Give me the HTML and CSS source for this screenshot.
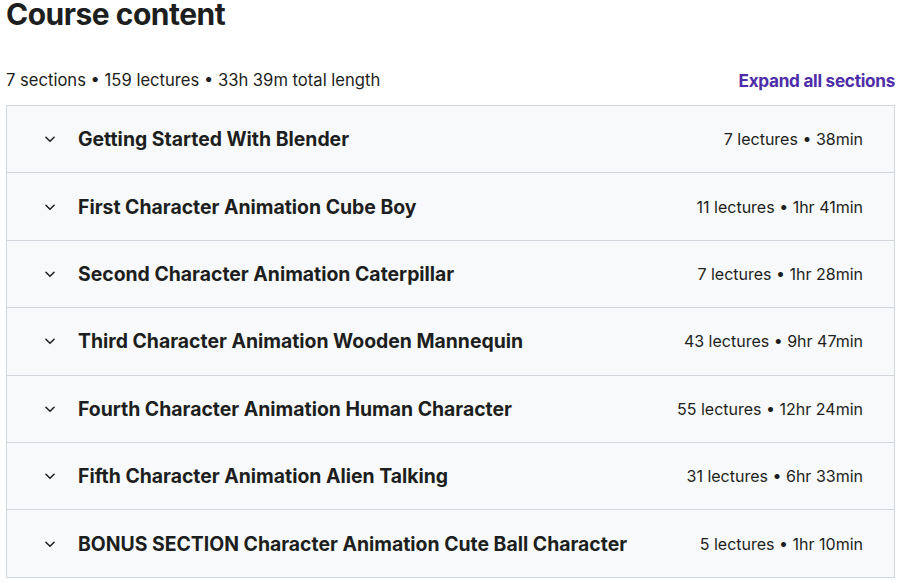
FILE: index.html
```html
<!DOCTYPE html>
<html>
<head>
<meta charset="utf-8">
<link rel="stylesheet" href="styles.css">
</head>
<body>
<div class="page">
  <h2 class="title">Course content</h2>
  <div class="meta">
    <span class="summary">7 sections • 159 lectures • 33h 39m total length</span>
    <button class="expand">Expand all sections</button>
  </div>
  <div class="sections">
    <div class="row">
      <span class="chev"><svg width="14" height="14" viewBox="0 0 24 24"><path d="M5 9l7 7 7-7" fill="none" stroke="#1d1e20" stroke-width="2.6" stroke-linecap="round" stroke-linejoin="round"/></svg></span>
      <span class="name">Getting Started With Blender</span>
      <span class="info">7 lectures • 38min</span>
    </div>
    <div class="row">
      <span class="chev"><svg width="14" height="14" viewBox="0 0 24 24"><path d="M5 9l7 7 7-7" fill="none" stroke="#1d1e20" stroke-width="2.6" stroke-linecap="round" stroke-linejoin="round"/></svg></span>
      <span class="name">First Character Animation Cube Boy</span>
      <span class="info">11 lectures • 1hr 41min</span>
    </div>
    <div class="row">
      <span class="chev"><svg width="14" height="14" viewBox="0 0 24 24"><path d="M5 9l7 7 7-7" fill="none" stroke="#1d1e20" stroke-width="2.6" stroke-linecap="round" stroke-linejoin="round"/></svg></span>
      <span class="name">Second Character Animation Caterpillar</span>
      <span class="info">7 lectures • 1hr 28min</span>
    </div>
    <div class="row">
      <span class="chev"><svg width="14" height="14" viewBox="0 0 24 24"><path d="M5 9l7 7 7-7" fill="none" stroke="#1d1e20" stroke-width="2.6" stroke-linecap="round" stroke-linejoin="round"/></svg></span>
      <span class="name">Third Character Animation Wooden Mannequin</span>
      <span class="info">43 lectures • 9hr 47min</span>
    </div>
    <div class="row">
      <span class="chev"><svg width="14" height="14" viewBox="0 0 24 24"><path d="M5 9l7 7 7-7" fill="none" stroke="#1d1e20" stroke-width="2.6" stroke-linecap="round" stroke-linejoin="round"/></svg></span>
      <span class="name">Fourth Character Animation Human Character</span>
      <span class="info">55 lectures • 12hr 24min</span>
    </div>
    <div class="row">
      <span class="chev"><svg width="14" height="14" viewBox="0 0 24 24"><path d="M5 9l7 7 7-7" fill="none" stroke="#1d1e20" stroke-width="2.6" stroke-linecap="round" stroke-linejoin="round"/></svg></span>
      <span class="name">Fifth Character Animation Alien Talking</span>
      <span class="info">31 lectures • 6hr 33min</span>
    </div>
    <div class="row">
      <span class="chev"><svg width="14" height="14" viewBox="0 0 24 24"><path d="M5 9l7 7 7-7" fill="none" stroke="#1d1e20" stroke-width="2.6" stroke-linecap="round" stroke-linejoin="round"/></svg></span>
      <span class="name">BONUS SECTION Character Animation Cute Ball Character</span>
      <span class="info">5 lectures • 1hr 10min</span>
    </div>
  </div>
</div>
</body>
</html>
```
FILE: styles.css
```css
* { box-sizing: border-box; }
html, body { margin: 0; padding: 0; background: #fff; }
body {
  font-family: Inter, "Noto Sans", sans-serif;
  color: #1d1e20;
}
.page {
  padding: 0 5px 0 6px;
}
.title {
  margin: -4px 0 0 0;
  font-size: 30px;
  line-height: 36px;
  font-weight: 700;
  letter-spacing: -0.5px;
}
.meta {
  display: flex;
  justify-content: space-between;
  align-items: center;
  margin-top: 36px;
  height: 24px;
  margin-bottom: 13px;
}
.summary {
  font-size: 16.6px;
}
.expand {
  border: 0;
  background: none;
  padding: 0;
  font-family: inherit;
  font-size: 17.2px;
  font-weight: 700;
  color: #4e2ea8;
  letter-spacing: -0.3px;
}
.sections {
  border: 1px solid #d1d7dc;
  border-bottom: 0;
}
.row {
  display: flex;
  align-items: center;
  height: 67.4px;
  background: #f7f9fa;
  border-bottom: 1px solid #d1d7dc;
  padding: 0 31px 0 36px;
}
.chev {
  display: flex;
  width: 14px;
  margin-right: 21px;
}
.name {
  flex: 1;
  font-size: 19.4px;
  font-weight: 700;
  letter-spacing: 0;
}
.info {
  font-size: 16px;
}
```
